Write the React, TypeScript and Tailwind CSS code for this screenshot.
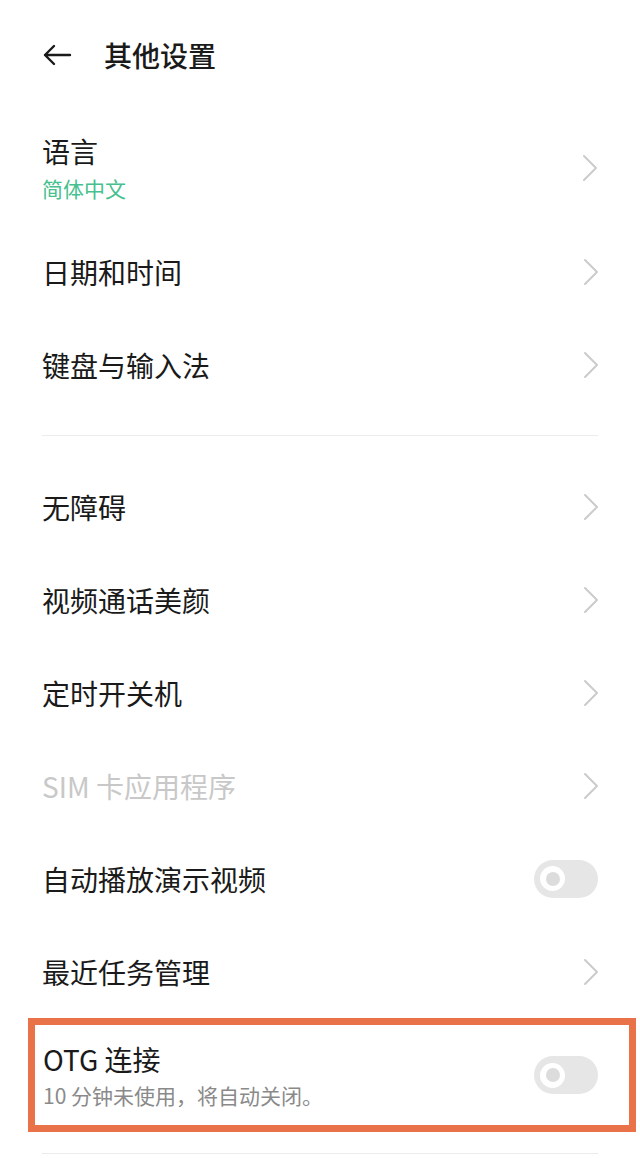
import React from "react";

const Chevron = () => (
  <svg width="16" height="28" viewBox="0 0 16 28" fill="none" className="shrink-0">
    <polyline points="2,2 14,14 2,26" stroke="#cbcbcb" strokeWidth="2" strokeLinejoin="round" strokeLinecap="round" />
  </svg>
);

const Toggle = () => (
  <div className="w-[64px] h-[38px] rounded-full bg-[#e6e6e6] flex items-center pl-[6px] shrink-0">
    <div className="w-[25px] h-[25px] rounded-full bg-white flex items-center justify-center">
      <div className="w-[14px] h-[14px] rounded-full bg-[#dcdcdc]" />
    </div>
  </div>
);

const Row = ({ title, disabled, toggle }: { title: string; disabled?: boolean; toggle?: boolean }) => (
  <div className="h-[93px] flex items-center justify-between">
    <span className={`text-[28px] ${disabled ? "text-[#c8c8c8]" : "text-[#1a1a1a]"}`}>{title}</span>
    {toggle ? <Toggle /> : <div className="mr-[-1px]"><Chevron /></div>}
  </div>
);

export default function App() {
  return (
    <div
      className="w-[640px] h-[1158px] bg-white overflow-hidden px-[42px]"
      style={{ fontFamily: '"Noto Sans CJK SC", "Noto Sans", sans-serif' }}
    >
      <div className="h-[110px] flex items-center">
        <svg width="30" height="22" viewBox="0 0 30 22" fill="none" className="shrink-0">
          <path d="M28 11H3M12 2L3 11l9 9" stroke="#1a1a1a" strokeWidth="2.4" strokeLinecap="round" strokeLinejoin="round" />
        </svg>
        <span className="ml-[32px] text-[28px] font-medium text-[#1a1a1a]">其他设置</span>
      </div>

      <div className="h-[115px] flex items-center justify-between">
        <div className="flex flex-col">
          <span className="text-[28px] leading-[36px] text-[#1a1a1a]">语言</span>
          <span className="text-[21px] leading-[28px] mt-[5px] text-[#46c08e]">简体中文</span>
        </div>
        <Chevron />
      </div>
      <Row title="日期和时间" />
      <Row title="键盘与输入法" />

      <div className="py-[24px]">
        <div className="h-[1px] bg-[#ececec]" />
      </div>

      <Row title="无障碍" />
      <Row title="视频通话美颜" />
      <Row title="定时开关机" />
      <Row title="SIM 卡应用程序" disabled />
      <Row title="自动播放演示视频" toggle />
      <Row title="最近任务管理" />

      <div className="ml-[-14px] mr-[-38px] h-[114px] border-[7px] border-[#ea7248] pl-[8px] pr-[31px] flex items-center justify-between">
        <div className="flex flex-col">
          <span className="text-[28px] leading-[34px] text-[#1a1a1a]">OTG 连接</span>
          <span className="text-[21px] leading-[26px] mt-[6px] text-[#8a8a8a]">10 分钟未使用，将自动关闭。</span>
        </div>
        <Toggle />
      </div>

      <div className="mt-[21px] h-[1px] bg-[#ececec]" />
    </div>
  );
}
